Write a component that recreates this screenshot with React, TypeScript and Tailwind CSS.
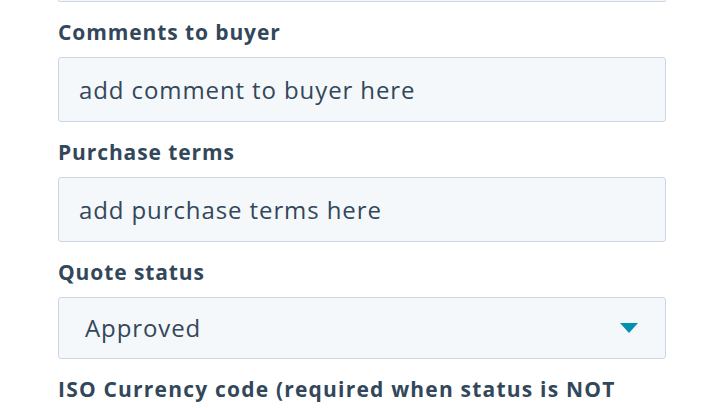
import React from 'react';

// form fields — quote details

const font = { fontFamily: '"Open Sans", "Liberation Sans", sans-serif' };

function FieldLabel({ children, wide }: { children: React.ReactNode; wide?: boolean }) {
  return (
    <div
      className={
        wide
          ? 'h-[29px] pt-[1px] mb-[11px] text-[21px] leading-[28px] font-bold tracking-[1.2px] text-[#33475b] whitespace-nowrap'
          : 'h-[29px] pt-[1px] mb-[11px] text-[21px] leading-[28px] font-bold tracking-[0.9px] text-[#33475b] whitespace-nowrap'
      }
    >
      {children}
    </div>
  );
}

function TextBox({ placeholder }: { placeholder: string }) {
  return (
    <div className="h-[65px] mb-[15px] flex items-center px-5 bg-[#f5f8fa] border border-[#cbd6e2] rounded-[3px] text-[24px] tracking-[0.9px] text-[#33475b]">
      {placeholder}
    </div>
  );
}

export default function App() {
  return (
    <div className="w-[726px] h-[408px] overflow-hidden bg-white" style={font}>
      <div className="w-[608px] ml-[58px]">
        {/* previous field, cut off by the top edge */}
        <div className="h-[2px] border-x border-b border-[#cbd6e2] rounded-b-[3px] bg-[#f5f8fa] mb-[15px]" />

        <FieldLabel>Comments to buyer</FieldLabel>
        <TextBox placeholder="add comment to buyer here" />

        <FieldLabel>Purchase terms</FieldLabel>
        <TextBox placeholder="add purchase terms here" />

        <FieldLabel>Quote status</FieldLabel>
        <div className="h-[62px] mb-[15px] flex items-center justify-between pl-[26px] pr-[27px] bg-[#f5f8fa] border border-[#cbd6e2] rounded-[3px] text-[24px] tracking-[0.9px] text-[#33475b]">
          <span>Approved</span>
          <svg width="18" height="10" viewBox="0 0 18 10">
            <path d="M0 0 H18 L9 10 Z" fill="#0091ae" />
          </svg>
        </div>

        <FieldLabel wide>ISO Currency code (required when status is NOT</FieldLabel>
      </div>
    </div>
  );
}
